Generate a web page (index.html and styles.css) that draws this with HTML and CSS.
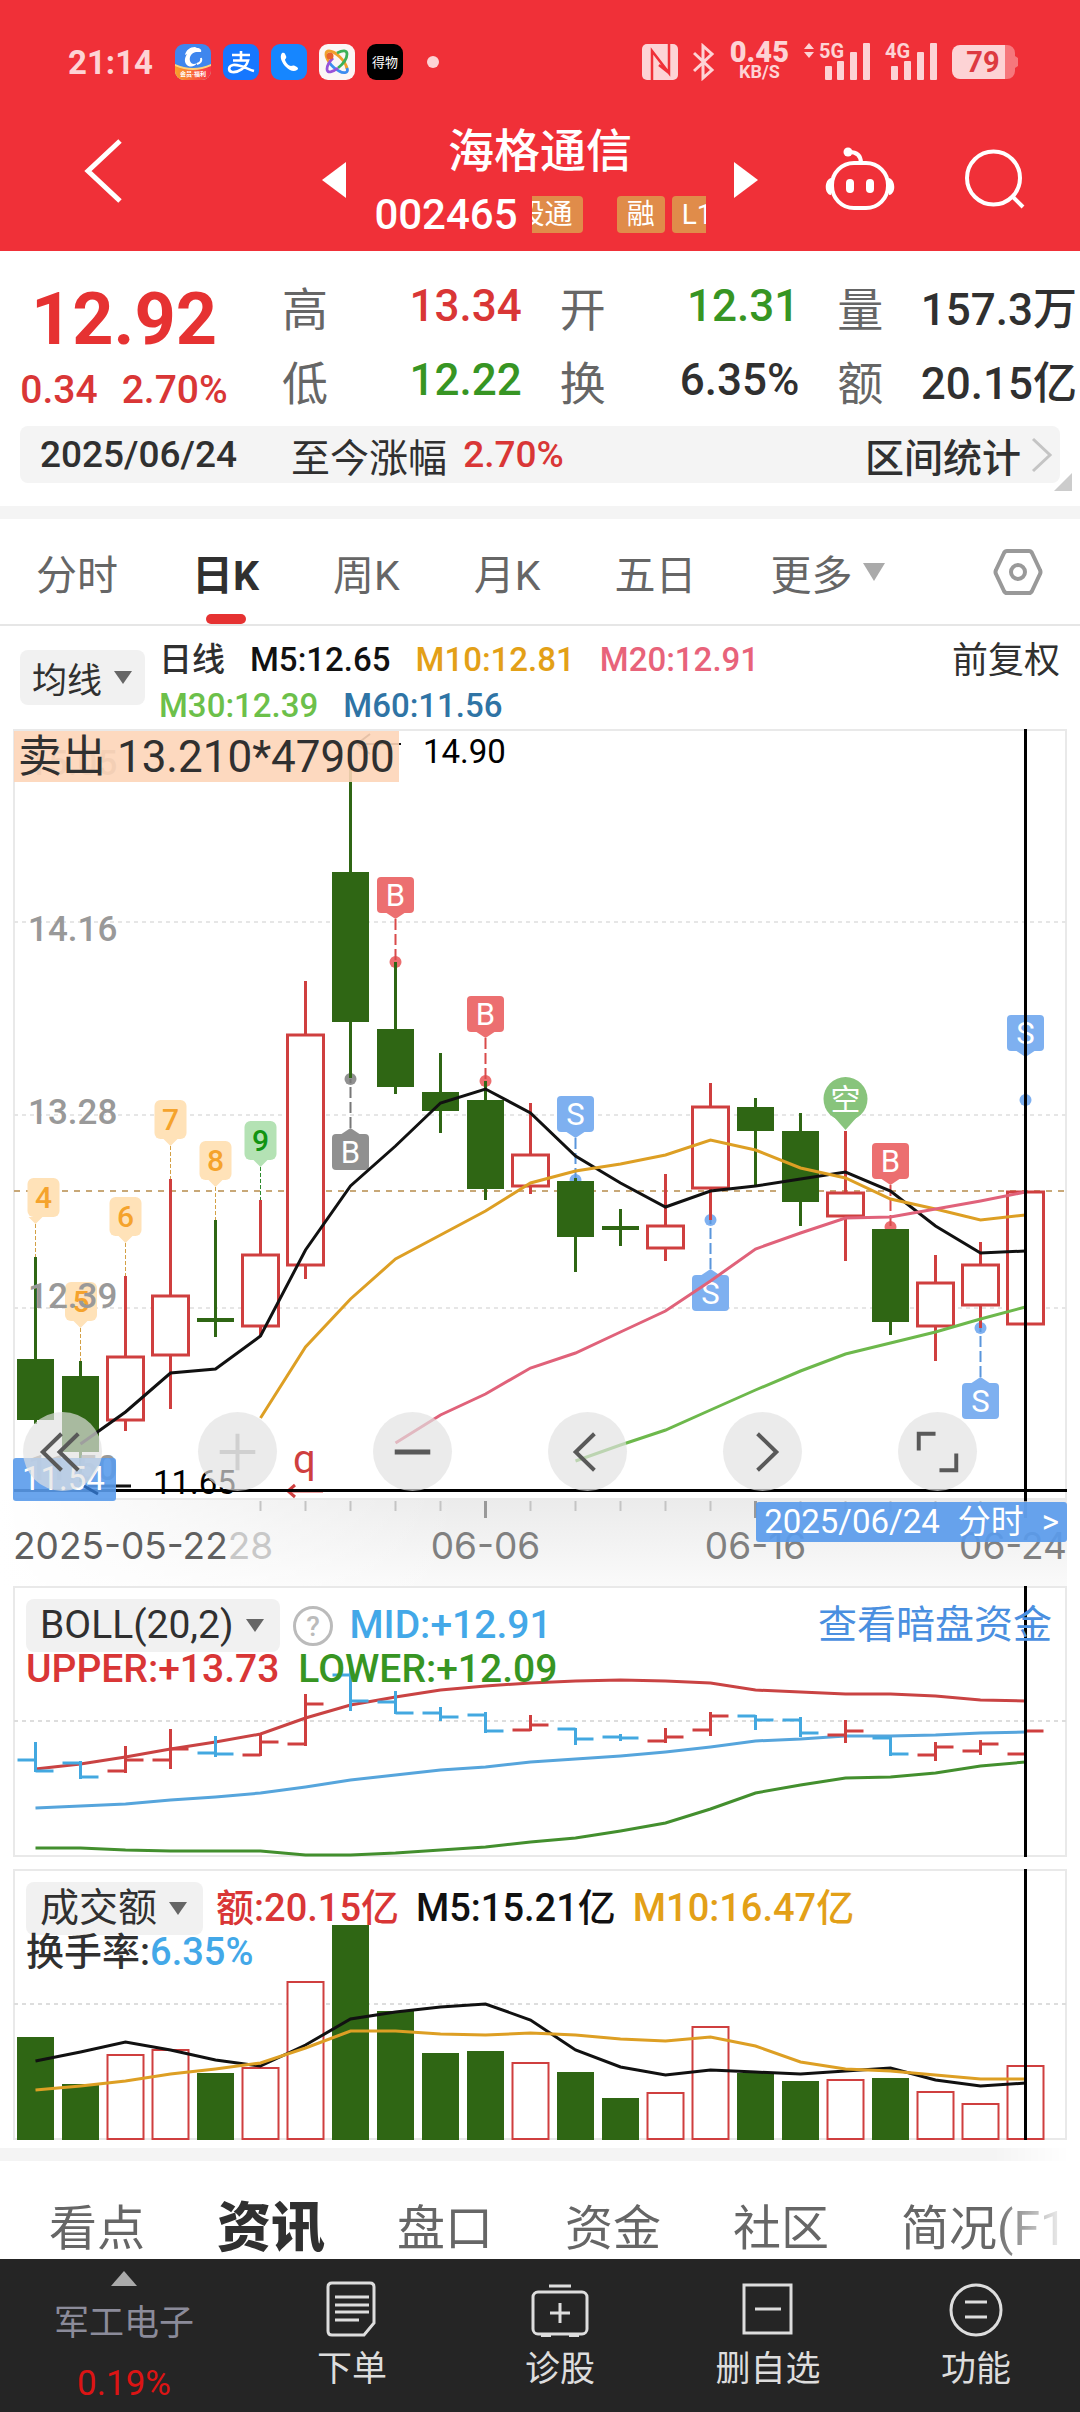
FILE: index.html
```html
<!DOCTYPE html>
<html lang="zh-CN">
<head>
<meta charset="utf-8">
<meta name="viewport" content="width=device-width, initial-scale=1">
<title>海格通信 002465</title>
<link rel="stylesheet" href="styles.css">
</head>
<body>
<header class="top">
  <div class="status">
    <time class="clock">21:14</time>
    <div class="apps">
      <svg class="app" viewBox="0 0 36 36"><defs><clipPath id="r"><rect width="36" height="36" rx="9"/></clipPath><linearGradient id="o" x1="0" x2="1"><stop offset="0" stop-color="#f9a22b"/><stop offset="1" stop-color="#f8304a"/></linearGradient></defs><g clip-path="url(#r)"><rect width="36" height="36" fill="#3f86ee"/><path d="M0 20Q18 28 36 20V36H0z" fill="#ffd27a"/><path d="M0 22Q18 30 36 22V36H0z" fill="url(#o)"/><path d="M10 11C11 6 15 3 20 3l2 1c3 0 5 2 4 4l-5 0c-5 1-7 5-6 9 1 3 4 4 7 2-2 4-8 5-11 1-2-3-1-7 1-10z" fill="#fff"/><path d="M22 20c3-1 5-3 4-6" fill="none" stroke="#fff" stroke-width="2"/></g><text x="18" y="32" class="app-tag">会员·福利</text></svg>
      <svg class="app" viewBox="0 0 36 36"><rect width="36" height="36" rx="9" fill="#1677ff"/><path d="M9 11h18M18 7v9M10 16.500h15C23 24 15 29 9 28c-4-1-4-6 1-7 7-1 14 4 21 6" fill="none" stroke="#fff" stroke-width="2.600"/></svg>
      <svg class="app" viewBox="0 0 36 36"><rect width="36" height="36" rx="9" fill="#1686ff"/><path d="M11 9c2-1 3 0 4 3 1 2-1 3-1 4 1 3 4 6 6 6 1 0 2-1 4 0 3 1 4 3 2 4-3 2-7 1-11-3S8 13 11 9z" fill="#fff"/></svg>
      <svg class="app" viewBox="0 0 36 36"><rect width="36" height="36" rx="9" fill="#fbf6f6"/><g fill="none" stroke-width="2.800"><path d="M10 18C6 12 6 7 10 7c6 0 17 10 18 18" stroke="#f0a02c"/><path d="M18 9c6-3 10-3 10 1 0 5-4 10-9 14" stroke="#3db158"/><path d="M28 24c2 5-3 6-8 3-4-2-8-6-10-9" stroke="#3c8df0"/><path d="M19 24c-5 4-11 6-11 1 0-4 3-8 6-11" stroke="#9852d8"/></g><circle cx="11" cy="12" r="3.500" fill="#e8602c"/></svg>
      <svg class="app" viewBox="0 0 36 36"><rect width="36" height="36" rx="9" fill="#000"/><text x="18" y="23" class="app-name">得物</text></svg>
      <span class="dot"></span>
    </div>
    <div class="signals">
      <svg width="36" height="36" viewBox="0 0 36 36"><rect width="36" height="36" rx="5" fill="#fdd3d5"/><path d="M10 36V7l17 22V0M17 21l10 8" fill="none" stroke="#f03038" stroke-width="2.500"/></svg>
      <svg width="22" height="38" viewBox="0 0 22 38"><path d="M1 10l18 17-9 8V3l9 8L1 28" fill="none" stroke="#fdd3d5" stroke-width="3"/></svg>
      <div class="speed"><b>0.45</b><span>KB/S</span></div>
      <svg width="66" height="38" viewBox="0 0 66 38" fill="#fdd3d5"><path d="M0 6l5-6 5 6zM0 9h10l-5 6z"/><text x="15" y="15" class="net">5G</text><rect x="21" y="23" width="7" height="14" rx="1"/><rect x="33" y="18" width="7" height="19" rx="1"/><rect x="46" y="9" width="7" height="28" rx="1"/><rect x="59" y="0" width="7" height="37" rx="1"/></svg>
      <svg width="52" height="38" viewBox="0 0 52 38" fill="#fdd3d5"><text x="0" y="15" class="net">4G</text><rect x="6" y="23" width="7" height="14" rx="1"/><rect x="19" y="18" width="7" height="19" rx="1"/><rect x="32" y="9" width="7" height="28" rx="1"/><rect x="45" y="0" width="7" height="37" rx="1"/></svg>
      <svg width="66" height="34" viewBox="0 0 66 34"><path d="M53 0h2a8 8 0 0 1 8 8v3l3 2v8l-3 2v3a8 8 0 0 1-8 8h-2z" fill="#f6777c"/><path d="M8 0h45v34H8a8 8 0 0 1-8-8V8a8 8 0 0 1 8-8z" fill="#fdd3d5"/><text x="31" y="27" class="batt">79</text></svg>
    </div>
  </div>
  <nav class="bar">
    <div class="bar-left"><button class="plain" aria-label="返回"><svg width="40" height="64" viewBox="0 0 40 64"><path d="M36 2L4 32l32 30" fill="none" stroke="#fff" stroke-width="5"/></svg></button></div>
    <div class="stock">
      <button class="plain" aria-label="上一只"><svg width="24" height="36" viewBox="0 0 24 36"><path d="M24 0v36L0 18z" fill="#fff"/></svg></button>
      <div class="stock-mid">
        <h1>海格通信</h1>
        <div class="code"><span>002465</span><div class="tags"><span class="tag tag-cut">股通</span><span class="tag">融</span><span class="tag">L1</span></div></div>
      </div>
      <button class="plain" aria-label="下一只"><svg width="24" height="36" viewBox="0 0 24 36"><path d="M0 0v36l24-18z" fill="#fff"/></svg></button>
    </div>
    <div class="bar-right">
      <button class="plain" aria-label="助手"><svg width="70" height="64" viewBox="0 0 70 64"><g fill="none" stroke="#fff" stroke-width="4"><rect x="7" y="16" width="56" height="45" rx="22"/><path d="M36 16c0-7-4-11-12-11"/></g><circle cx="23" cy="5" r="4.500" fill="#fff"/><path d="M6 31C-1 33-1 47 6 48zM64 31c7 2 7 16 0 17z" fill="#fff"/><rect x="21" y="32" width="8" height="14" rx="4" fill="#fff"/><rect x="41" y="32" width="8" height="14" rx="4" fill="#fff"/></svg></button>
      <button class="plain" aria-label="搜索"><svg width="60" height="60" viewBox="0 0 60 60" fill="none" stroke="#fff" stroke-width="4"><circle cx="28.500" cy="29" r="26.500"/><path d="M47 47l11 11"/></svg></button>
    </div>
  </nav>
</header>

<section class="quote">
  <div class="last"><strong>12.92</strong><div><span>0.34</span><span>2.70%</span></div></div>
  <dl class="stats">
    <div><dt>高</dt><dd class="up">13.34</dd></div><div><dt>开</dt><dd class="down">12.31</dd></div><div><dt>量</dt><dd>157.3万</dd></div>
    <div><dt>低</dt><dd class="down">12.22</dd></div><div><dt>换</dt><dd>6.35%</dd></div><div><dt>额</dt><dd>20.15亿</dd></div>
  </dl>
</section>
<div class="range">
  <span class="range-date">2025/06/24</span><span class="range-label">至今涨幅</span><span class="up">2.70%</span>
  <a class="range-link" href="#stats">区间统计<svg width="22" height="36" viewBox="0 0 22 36"><path d="M2 2l17 16L2 34" fill="none" stroke="#c4c4c4" stroke-width="3"/></svg></a>
  <svg class="corner" width="18" height="18" viewBox="0 0 18 18"><path d="M18 0v18H0z" fill="#ccc"/></svg>
</div>

<nav class="periods">
  <button class="plain">分时</button><button class="plain on">日K</button><button class="plain">周K</button><button class="plain">月K</button><button class="plain">五日</button>
  <button class="plain more">更多<svg width="22" height="18" viewBox="0 0 22 18"><path d="M0 0h22L11 18z" fill="#aaa"/></svg></button>
  <button class="plain gear" aria-label="设置"><svg width="50" height="46" viewBox="0 0 50 46" fill="none" stroke="#999" stroke-width="4"><path d="M14 2h22q2 0 3 2l8 17q1 2 0 4l-8 17q-1 2-3 2H14q-2 0-3-2L3 25q-1-2 0-4l8-17q1-2 3-2z"/><circle cx="25" cy="23" r="7"/></svg></button>
</nav>

<section class="ma">
  <button class="drop">均线<svg width="18" height="13" viewBox="0 0 18 13"><path d="M0 0h18l-9 13z" fill="#666"/></svg></button>
  <div class="ma-list"><span>日线</span><span class="c5">M5:12.65</span><span class="c10">M10:12.81</span><span class="c20">M20:12.91</span><span class="c30">M30:12.39</span><span class="c60">M60:11.56</span></div>
  <a class="adjust" href="#adjust">前复权</a>
</section>

<section class="price">
  <svg id="kline" class="chart" viewBox="0 728 1080 858"></svg>
  <div class="controls">
    <button aria-label="最早"><svg viewBox="0 0 80 80"><path d="M39 22L20 40.500 39 59M56 22L37 40.500 56 59"/></svg></button>
    <button aria-label="放大" disabled><svg viewBox="0 0 80 80"><path d="M22 40.500h36M40 22v37"/></svg></button>
    <button aria-label="缩小"><svg viewBox="0 0 80 80"><path d="M22 40.500h36" class="thick"/></svg></button>
    <button aria-label="向左"><svg viewBox="0 0 80 80"><path d="M47 22L28 40.500 47 59"/></svg></button>
    <button aria-label="向右"><svg viewBox="0 0 80 80"><path d="M35 22l19 18.500L35 59"/></svg></button>
    <button aria-label="全屏"><svg viewBox="0 0 80 80"><path d="M38 22H21v17M42 59h17V42"/></svg></button>
  </div>
  <a class="day-link" href="#day"><span>2025/06/24</span><span>分时</span><span>&gt;</span></a>
</section>

<section class="panel">
  <svg id="boll" class="chart" viewBox="0 1586 1080 283"></svg>
  <div class="legend boll-legend">
    <button class="drop">BOLL(20,2)<svg width="18" height="13" viewBox="0 0 18 13"><path d="M0 0h18l-9 13z" fill="#666"/></svg></button>
    <svg class="help" width="40" height="40" viewBox="0 0 40 40"><circle cx="20" cy="20" r="18.500" fill="none" stroke="#bbb" stroke-width="3"/><text x="20" y="30">?</text></svg>
    <span class="mid">MID:+12.91</span>
    <a class="dark" href="#dark">查看暗盘资金</a>
    <div class="legend-row"><span class="up">UPPER:+13.73</span><span class="down">LOWER:+12.09</span></div>
  </div>
</section>
<section class="panel">
  <svg id="vol" class="chart" viewBox="0 1869 1080 279"></svg>
  <div class="legend">
    <button class="drop">成交额<svg width="18" height="13" viewBox="0 0 18 13"><path d="M0 0h18l-9 13z" fill="#666"/></svg></button>
    <span class="up">额:20.15亿</span><span class="c5">M5:15.21亿</span><span class="c10">M10:16.47亿</span>
    <div class="legend-row"><span>换手率:<span class="mid">6.35%</span></span></div>
  </div>
</section>

<nav class="tabs"><a href="#view">看点</a><a href="#news" class="on">资讯</a><a href="#book">盘口</a><a href="#fund">资金</a><a href="#club">社区</a><a href="#brief">简况(F10)</a></nav>

<footer class="foot">
  <button class="plain sector"><svg width="26" height="15" viewBox="0 0 26 15"><path d="M13 0l13 15H0z" fill="#aaa"/></svg><span>军工电子</span><b>0.19%</b></button>
  <button class="plain"><svg viewBox="0 0 58 56"><path d="M9 2h38q4 0 4 4v36l-10 12H9q-4 0-4-4V6q0-4 4-4z"/><path d="M12 16h34M12 24h34M12 31h34M12 39h24"/></svg>下单</button>
  <button class="plain"><svg viewBox="0 0 58 56"><rect x="2" y="11" width="54" height="42" rx="5"/><path d="M18 5h22M29 22v20M19 32h20M10 55h10M38 55h10"/></svg>诊股</button>
  <button class="plain"><svg viewBox="0 0 58 56"><rect x="5" y="4" width="47" height="48"/><path d="M16 28h26"/></svg>删自选</button>
  <button class="plain"><svg viewBox="0 0 58 56"><circle cx="29" cy="29" r="25"/><path d="M18 21h22M18 36h22"/></svg>功能</button>
</footer>
<script src="chart.js"></script>
</body>
</html>
```
FILE: styles.css
```css
* { box-sizing: border-box; }
body { margin: 0; background: #fff; color: #303030; font-family: Roboto, "Noto Sans CJK SC", sans-serif; font-size: 36px; overflow-x: hidden; }
button, a { font: inherit; color: inherit; text-decoration: none; }
.plain { border: 0; padding: 0; background: none; }
svg { display: block; flex: none; }
.up { color: #d93636; }
.down { color: #379523; }
.c5 { color: #111; }
.c10 { color: #e3a017; }
.c20 { color: #e8637a; }
.c30 { color: #6cc04a; }
.c60 { color: #2f74a5; }
.mid { color: #43a8e8; }

.top { background: #f03038; color: #fff; padding-top: 36px; }
.status { display: flex; align-items: center; height: 52px; padding: 0 62px 0 68px; color: #fdd3d5; }
.clock { font-size: 33px; font-weight: 700; width: 107px; }
.apps { display: flex; align-items: center; gap: 12px; }
.app { width: 36px; height: 36px; }
.app-tag { font-size: 6px; font-weight: 700; fill: #fff; text-anchor: middle; }
.app-name { font-size: 13px; fill: #fff; text-anchor: middle; }
.dot { width: 12px; height: 12px; border-radius: 50%; background: #fdd3d5; margin-left: 12px; }
.signals { display: flex; align-items: center; gap: 15px; margin-left: auto; }
.speed { display: flex; flex-direction: column; align-items: center; font-weight: 700; line-height: 20px; font-size: 18px; }
.speed b { font-size: 29px; }
.net { font-size: 20px; font-weight: 700; }
.batt { font-size: 29px; font-weight: 700; fill: #dd3a40; text-anchor: middle; }
.bar { display: grid; grid-template-columns: 1fr 437px 1fr; align-items: center; height: 163px; }
.bar-left { padding: 12px 0 0 84px; }
.bar-right { display: flex; align-items: center; justify-content: flex-end; gap: 70px; padding: 18px 55px 0 0; }
.stock { display: flex; align-items: center; justify-content: space-between; }
.stock > .plain { padding-top: 20px; }
.stock-mid { display: flex; flex-direction: column; align-items: center; padding-top: 24px; }
h1 { margin: 0; font-size: 46px; line-height: 66px; font-weight: 500; }
.code { display: flex; align-items: center; gap: 14px; font-size: 42px; font-weight: 500; line-height: 62px; }
.tags { display: flex; width: 174px; gap: 7px; overflow: hidden; }
.tag { flex: none; background: #e08c4a; border-radius: 4px; font-size: 28px; font-weight: 400; line-height: 37px; padding: 0 10px; }
.tag-cut { margin: 0 27px 0 -25px; }

.quote { display: grid; grid-template-columns: 248px 1fr; gap: 34px; padding: 19px 3px 0 0; height: 164px; }
.last { display: flex; flex-direction: column; align-items: center; color: #e63232; padding-top: 8px; }
.last strong { font-size: 72px; line-height: 84px; font-weight: 700; }
.last div { display: flex; gap: 24px; font-size: 39px; line-height: 56px; font-weight: 500; color: #d93636; }
.stats { margin: 0; display: grid; grid-template-columns: repeat(3, 1fr); column-gap: 38px; }
.stats div { display: flex; justify-content: space-between; align-items: center; white-space: nowrap; height: 71px; }
dt { font-size: 46px; color: #666; }
dd { margin: 0; font-size: 44px; font-weight: 500; }
.range { position: relative; display: flex; align-items: center; height: 57px; margin: 11px 20px 23px; padding: 0 7px 0 20px; border-radius: 8px; background: #f4f4f4; font-size: 37px; font-weight: 500; }
.range-date { margin-right: 54px; }
.range-label { margin-right: 16px; font-size: 39px; font-weight: 400; }
.range-link { margin-left: auto; display: flex; align-items: center; gap: 10px; font-size: 39px; }
.corner { position: absolute; right: -12px; bottom: -8px; }

.periods { display: flex; align-items: center; gap: 74px; height: 120px; padding: 0 37px 0 36px; border-top: 13px solid #f4f4f4; border-bottom: 2px solid #e6e6e6; font-size: 41px; color: #666; }
.periods .plain { height: 105px; }
.on { position: relative; color: #303030; font-weight: 700; }
.periods .on::after { content: ""; position: absolute; left: 50%; bottom: 0; width: 40px; height: 10px; margin-left: -20px; border-radius: 5px; background: #e63232; }
.more { display: flex; align-items: center; gap: 10px; }
.gear { margin-left: auto; }

.ma { display: flex; padding: 11px 20px 0; height: 102px; }
.drop { display: flex; align-items: center; gap: 12px; border: 0; border-radius: 8px; background: #f1f1f1; color: #303030; padding: 0 13px 0 12px; font-size: 35px; }
.ma .drop { height: 55px; margin-top: 13px; }
.ma-list { flex: 0 0 650px; display: flex; flex-wrap: wrap; column-gap: 25px; margin-left: 14px; font-size: 33px; line-height: 45px; font-weight: 500; }
.adjust { margin-left: auto; line-height: 48px; }

.price, .panel { position: relative; }
.chart { width: 100%; height: auto; font-family: inherit; }
.controls { position: absolute; left: 23px; right: 103px; top: 684px; display: flex; justify-content: space-between; }
.controls button { width: 79px; height: 79px; border: 0; padding: 0; border-radius: 50%; background: rgba(226, 226, 226, .68); }
.controls path { fill: none; stroke: #595959; stroke-width: 4; }
.controls .thick { stroke-width: 5; }
.controls button:disabled path { stroke: #d0d0d0; }
.day-link { position: absolute; right: 13px; top: 774px; display: flex; gap: 18px; height: 40px; line-height: 40px; padding: 0 8px; border-radius: 3px; background: rgba(90, 155, 235, .92); color: #fff; font-size: 33px; }
.legend { position: absolute; left: 26px; right: 28px; top: 13px; display: flex; flex-wrap: wrap; align-items: center; font-size: 38px; line-height: 53px; font-weight: 500; column-gap: 17px; }
.legend .drop { height: 53px; padding: 0 16px 0 14px; font-size: 39px; font-weight: 400; margin-right: -4px; }
.boll-legend { font-size: 39px; }
.help text { font-size: 28px; fill: #bbb; text-anchor: middle; }
.dark { margin-left: auto; font-size: 39px; font-weight: 400; color: #4a8fe0; }
.legend-row { flex: 0 0 100%; display: flex; gap: 19px; line-height: 34px; }

.axis { font-size: 35px; font-weight: 500; fill: #999; }
.date { font-family: Inter, sans-serif; font-size: 37px; fill: #808080; }
.note { font-size: 33px; }

.tabs { display: flex; align-items: center; gap: 72px; height: 111px; padding: 38px 0 0 49px; border-top: 13px solid #f4f4f4; overflow: hidden; white-space: nowrap; font-size: 48px; line-height: 60px; color: #666; mask-image: linear-gradient(90deg, #000 92%, transparent 99%); }
.tabs .on { font-size: 54px; font-weight: 900; }
.foot { display: grid; grid-template-columns: 248px repeat(4, 1fr); height: 153px; background: #252525; color: #ddd; font-size: 35px; }
.foot .plain { display: flex; flex-direction: column; align-items: center; padding-top: 22px; line-height: 50px; }
.foot .plain > svg { width: 58px; height: 56px; fill: none; stroke: #ddd; stroke-width: 3; margin-bottom: 8px; }
.foot .sector { padding-top: 12px; color: #8b8b9a; line-height: 60px; }
.foot .sector > svg { width: 26px; height: 15px; stroke: none; margin-bottom: 8px; }
.sector b { font-weight: 400; color: #dc1414; }
```
FILE: chart.js
```js
const X = i => 35.5 + 45 * i;
const GREEN = '#2f6614', RED = '#cf3f3f';

// [up, high, body top, body bottom, low]
const candles = [
  [0,1257,1359,1420,1424],[0,1361,1376,1452,1482],[1,1276,1356,1421,1431],[1,1179,1295,1356,1409],
  [0,1220,1318,1322,1337],[1,1200,1254,1327,1336],[1,981,1034,1266,1279],[0,744,872,1022,1078],
  [0,962,1029,1087,1094],[0,1053,1092,1111,1133],[0,1081,1100,1189,1200],[1,1103,1154,1187,1194],
  [0,1178,1181,1237,1272],[0,1209,1226,1230,1246],[1,1174,1225,1249,1261],[1,1083,1106,1189,1220],
  [0,1098,1107,1131,1185],[0,1113,1131,1202,1226],[1,1131,1192,1217,1261],[0,1229,1229,1322,1335],
  [1,1255,1282,1327,1361],[1,1242,1264,1306,1328],[1,1100,1191,1325,1344]
];
const averages = [
  [1,'#111',[1444,1412,1373,1369,1336,1250,1186,1146,1103,1089,1113,1156,1183,1207,1191,1186,1179,1172,1191,1226,1253,1251]],
  [5,'#dd9f24',[1418,1347,1299,1259,1235,1211,1183,1171,1164,1155,1140,1150,1168,1178,1199,1209,1220,1215]],
  [8,'#e0627a',[1443,1415,1394,1368,1353,1332,1311,1281,1249,1233,1218,1217,1209,1201,1192]],
  [12,'#6db84c',[1461,1445,1430,1410,1390,1371,1354,1343,1332,1319,1307]]
];
const bands = [
  [0,'#c94343',[1769,1764,1757,1749,1742,1734,1718,1705,1697,1690,1686,1683,1681,1680,1681,1683,1690,1692,1694,1694,1696,1700,1701]],
  [0,'#56a5dc',[1808,1806,1804,1800,1797,1793,1787,1780,1775,1770,1767,1762,1759,1756,1752,1747,1741,1739,1736,1736,1735,1733,1732]],
  [0,'#438f2e',[1848,1848,1850,1851,1851,1851,1855,1855,1853,1850,1847,1842,1838,1831,1823,1809,1793,1785,1778,1777,1773,1766,1762]]
];
// [up, high, open, close, low]
const ticks = [
  [0,1742,1760,1771,1772],[0,1761,1763,1777,1779],[1,1746,1771,1760,1773],[1,1729,1760,1749,1769],
  [0,1736,1753,1754,1757],[1,1733,1755,1742,1756],[1,1694,1744,1704,1746],[0,1662,1675,1701,1711],
  [0,1691,1702,1713,1714],[0,1707,1713,1717,1721],[0,1712,1715,1731,1733],[1,1715,1730,1725,1731],
  [0,1728,1729,1739,1745],[0,1734,1737,1738,1741],[1,1728,1741,1737,1743],[1,1712,1730,1716,1736],
  [0,1715,1716,1720,1730],[0,1717,1720,1733,1737],[1,1720,1735,1731,1743],[0,1737,1738,1754,1756],
  [1,1742,1755,1747,1761],[1,1740,1751,1744,1755],[1,1715,1754,1731,1758]
];
const volumes = [2037,2084,2054,2049,2073,2067,1981,1925,2011,2053,2051,2062,2072,2098,2092,2026,2073,2081,2079,2078,2091,2103,2065];
const volumeAverages = [
  [0,'#111',[2061,2052,2042,2050,2060,2066,2045,2019,2012,2007,2004,2020,2050,2067,2075,2070,2072,2074,2071,2068,2080,2086,2083]],
  [0,'#dd9f24',[2090,2086,2081,2074,2069,2063,2048,2031,2031,2034,2035,2033,2035,2039,2041,2037,2046,2062,2069,2071,2075,2079,2079]]
];

const COLORS = { B: ['#ec6f70', '#d94a4a'], S: ['#7eb0f0', '#5a96dc'], grey: ['#909090', '#777'] };
// [candle, letter, box top, dot, colour, hide the stem]
const trades = [
  [7,'B',1134,1079,'grey'],[8,'B',877,962,'B'],[10,'B',996,1081,'B'],[12,'S',1096,1180,'S'],[15,'S',1275,1220,'S'],
  [19,'B',1143,1227,'B'],[21,'S',1383,1328,'S'],[22,'S',1015,1100,'S',true]
];

const line = (x1, y1, x2, y2, c, w = 3, extra = '') => `<path d="M${x1} ${y1}L${x2} ${y2}" stroke="${c}" stroke-width="${w}" fill="none" ${extra}/>`;
const rect = (x, y, w, h, fill, extra = '') => `<rect x="${x}" y="${y}" width="${w}" height="${h}" fill="${fill}" ${extra}/>`;
const text = (x, y, s, cls, extra = '') => `<text x="${x}" y="${y}" class="${cls}" ${extra}>${s}</text>`;
const curve = ([start, c, ys]) => `<polyline points="${ys.map((y, k) => X(start + k) + ',' + y).join(' ')}" fill="none" stroke="${c}" stroke-width="3"/>`;
const frame = (top, bottom) => `<rect x="14" y="${top}" width="1052" height="${bottom - top}" fill="none" stroke="#e9e9e9" stroke-width="2"/>`;
const dash = (y, c = '#e6e6e6', d = '4 4', w = 2) => line(14, y, 1066, y, c, w, `stroke-dasharray="${d}"`);

const stem = ([i, , y, dot, key, bare]) => {
  const tip = dot > y ? y + 42 : y - 6, x = X(i);
  return `<circle cx="${x}" cy="${dot}" r="6" fill="${COLORS[key][0]}"/>` + (bare ? '' : line(x, tip, x, dot, COLORS[key][1], 2, 'stroke-dasharray="11 4"'));
};
const flag = ([i, letter, y, dot, key]) => {
  const x = X(i), above = dot > y, edge = above ? y + 36 : y, tip = above ? y + 42 : y - 6, c = COLORS[key][0];
  return rect(x - 18.5, y, 37, 36, c, 'rx="4"') + `<path d="M${x - 9} ${edge}h18L${x} ${tip}z" fill="${c}"/>` +
    text(x, y + 29, letter, '', 'font-size="31" fill="#fff" text-anchor="middle"');
};
function count(i, n, cx, y, green) {
  const x = X(i), bg = green ? '#b4e2b4' : '#ffe2b8', fg = green ? '#129412' : '#f5a32c';
  return rect(cx - 16, y, 32, 39, bg, 'rx="6"') + `<path d="M${x - 7} ${y + 39}h14l-7 7z" fill="${bg}"/>` +
    line(x, y + 46, x, candles[i][1], green ? '#2c8a2c' : '#d3a045', 1, 'stroke-dasharray="4 2"') +
    text(cx, y + 30, n, '', `font-size="30" font-weight="500" fill="${fg}" text-anchor="middle"`);
}

function drawPrice() {
  let s = '<defs><linearGradient id="fall" x1="0" y1="0" x2="0" y2="1"><stop offset="0" stop-color="#ebebeb"/><stop offset="1" stop-color="#fafafa"/></linearGradient>' +
    '<linearGradient id="fade"><stop offset="0" stop-color="#fff"/><stop offset="1" stop-color="#fff" stop-opacity="0"/></linearGradient></defs>';
  s += rect(0, 1499, 1067, 87, 'url(#fall)') + rect(0, 1499, 460, 87, 'url(#fade)');
  s += frame(730, 1499) + dash(922) + dash(1115) + dash(1308);
  s += dash(1191, '#c8a878', '6 6') + trades.map(stem).join('');
  candles.forEach(([up, high, top, bottom, low], i) => {
    const x = X(i), c = up ? RED : GREEN;
    s += line(x, high, x, top, c) + line(x, bottom, x, low, c);
    s += up ? rect(x - 18, top + 1, 36, bottom - top - 2, '#fff', `stroke="${c}" stroke-width="3"`) : rect(x - 18.5, top, 37, bottom - top, c);
  });
  s += count(0, 4, 43.5, 1178) + count(1, 5, 81, 1282) + count(2, 6, 125.5, 1197) + count(3, 7, 170.5, 1100) + count(4, 8, 215.5, 1141) + count(5, 9, 260.5, 1121, true);
  s += trades.map(flag).join('');
  s += '<path d="M834 1117l11.500 13 11.500-13z" fill="#88c47c"/><circle cx="845.500" cy="1099" r="22" fill="#88c47c"/>' + text(845.5, 1110, '空', '', 'font-size="30" fill="#fff" text-anchor="middle"');
  s += averages.map(curve).join('');
  s += text(28, 941, '14.16', 'axis') + text(28, 1124, '13.28', 'axis') + text(28, 1308, '12.39', 'axis') + text(28, 1480, '11.50', 'axis');
  s += text(28, 775, '15.05', 'axis') + line(357, 744, 401, 744, '#111', 2) + line(370, 734, 357, 744, '#111', 2) + line(370, 754, 357, 744, '#111', 2);
  s += rect(14, 731, 385, 51, '#fdd5b8', 'opacity=".9"') + text(18, 772, '卖出 13.210*47900', '', 'font-size="44" fill="#303030"');
  s += text(423, 763, '14.90', 'note');
  s += text(153, 1494, '11.65', 'note') + line(88, 1486, 131, 1486, '#111', 3);
  s += text(293, 1473, 'q', '', `font-size="40" fill="${RED}"`) + line(288, 1491, 323, 1491, RED, 3) + `<path d="M295 1485l-7 6 7 6" stroke="${RED}" stroke-width="3" fill="none"/>`;
  s += line(14, 1490.5, 1067, 1490.5, '#000') + line(1025.5, 729, 1025.5, 1502, '#000');
  s += rect(13, 1458, 103, 43, '#5a9beb', 'rx="3" opacity=".9"') + text(22, 1490, '11.54', 'note', 'fill="#fff"') + `<path d="M98 1494l-14-8" stroke="#2c66b0" stroke-width="3"/>`;
  for (let i = 5; i < 23; i++) s += line(X(i), 1501, X(i), [10,16,22].includes(i) ? 1518 : 1511, [10,16,22].includes(i) ? '#999' : '#c4c4c4', [10,16,22].includes(i) ? 3 : 2);
  s += text(13, 1559, '2025-05-22<tspan fill="#c8c8c8">28</tspan>', 'date', 'style="fill:#606060"');
  s += text(485.5, 1559, '06-06', 'date', 'text-anchor="middle"') + text(755.5, 1559, '06-16', 'date', 'text-anchor="middle"') + text(1067, 1559, '06-24', 'date', 'text-anchor="end"');
  document.getElementById('kline').innerHTML = s;
}
function drawBands() {
  let s = frame(1587, 1856) + dash(1721, '#ddd') + bands.map(curve).join('');
  ticks.forEach(([up, high, open, close, low], i) => {
    const x = X(i), c = up ? RED : '#43a8e0';
    s += line(x, high, x, low, c) + line(x - 18, open, x, open, c) + line(x, close, x + 18, close, c);
  });
  document.getElementById('boll').innerHTML = s + line(1025.5, 1586, 1025.5, 1857, '#000');
}
function drawVolume() {
  let s = frame(1870, 2139) + dash(2004, '#ddd');
  volumes.forEach((top, i) => {
    const x = X(i);
    s += candles[i][0] ? rect(x - 18, top + 1, 36, 2138 - top, '#fff', `stroke="${RED}" stroke-width="2"`) : rect(x - 18.5, top, 37, 2140 - top, GREEN);
  });
  document.getElementById('vol').innerHTML = s + volumeAverages.map(curve).join('') + line(1025.5, 1869, 1025.5, 2140, '#000');
}
drawPrice();
drawBands();
drawVolume();
```
